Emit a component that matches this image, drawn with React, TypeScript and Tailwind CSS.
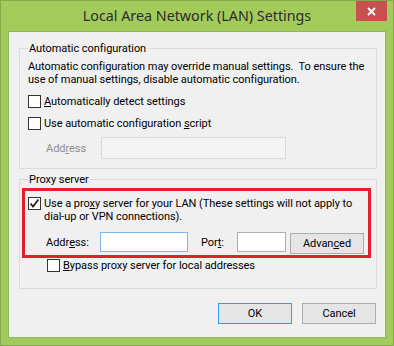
import React from 'react';

const Check: React.FC<{ checked?: boolean }> = ({ checked }) => (
  <div className="w-[13px] h-[13px] shrink-0 border border-[#333333] bg-white flex items-center justify-center">
    {checked && (
      <svg width="11" height="11" viewBox="0 0 11 11">
        <path d="M1.5 5.5 L4 8.5 L9.5 1.5" fill="none" stroke="#222" strokeWidth="1.8" />
      </svg>
    )}
  </div>
);

const Button: React.FC<{ children: React.ReactNode; primary?: boolean; className?: string }> = ({
  children,
  primary,
  className = '',
}) => (
  <button
    className={`w-[74px] h-[21px] flex items-center justify-center bg-[#e5e5e5] border ${
      primary ? 'border-[#3399ff]' : 'border-[#adadad]'
    } ${className}`}
  >
    {children}
  </button>
);

export default function App() {
  return (
    <div className="w-[394px] h-[346px] bg-[#a2cb5b] border border-[#84ab48] flex flex-col font-['Roboto',sans-serif] text-[11px] tracking-[-0.05px] leading-[13px] text-black">
      {/* title bar */}
      <div className="h-[30px] grid grid-cols-[38px_1fr_38px]">
        <div />
        <div className="flex items-center justify-center font-['Noto_Sans',sans-serif] tracking-normal text-[14.3px] text-[#2b2b2b] pb-[1px]">
          Local Area Network (LAN) Settings
        </div>
        <div className="flex justify-end pr-[6px]">
          <div className="w-[31px] h-[20px] bg-[#c75050] flex items-center justify-center">
            <svg width="9" height="9" viewBox="0 0 9 9">
              <path d="M1 1 L8 8 M8 1 L1 8" stroke="#fff" strokeWidth="1.8" />
            </svg>
          </div>
        </div>
      </div>

      {/* dialog body */}
      <div className="mx-[7px] h-[307px] bg-[#f0f0f0] border border-[#93b757] pl-[10px] pr-[8px] flex flex-col">
        {/* Automatic configuration */}
        <fieldset className="mt-[9px] border border-[#dcdcdc] pl-[8px] pr-[4px] pb-[9px]">
          <legend className="px-[1px] leading-[15px]">Automatic configuration</legend>
          <div className="mt-[4px] whitespace-pre">
            <div>Automatic configuration may override manual settings.  To ensure the</div>
            <div>use of manual settings, disable automatic configuration.</div>
          </div>
          <div className="mt-[9px] flex items-center gap-[3px]">
            <Check />
            <span>
              <u>A</u>utomatically detect settings
            </span>
          </div>
          <div className="mt-[9px] flex items-center gap-[3px]">
            <Check />
            <span>
              Use automatic configuration <u>s</u>cript
            </span>
          </div>
          <div className="mt-[7px] ml-[18px] flex items-center">
            <span className="w-[55px] text-[#8d8d8d]">
              Add<u>r</u>ess
            </span>
            <div className="w-[185px] h-[22px] border border-[#dadada] bg-[#f3f3f3]" />
          </div>
        </fieldset>

        {/* Proxy server */}
        <fieldset className="mt-[3px] border border-[#dcdcdc] pl-[2px] pr-[5px] pb-[16px]">
          <legend className="ml-[6px] px-[1px] leading-[15px]">Proxy server</legend>
          <div className="mt-[1px] border-[3px] border-[#e81c2a] pl-[3px] pt-[6px] pb-[1px] pr-[2px]">
            <div className="flex items-start gap-[3px]">
              <Check checked />
              <div className="whitespace-nowrap">
                <div>
                  Use a pro<u>x</u>y server for your LAN (These settings will not apply to
                </div>
                <div>dial-up or VPN connections).</div>
              </div>
            </div>
            <div className="mt-[9px] ml-[18px] flex items-start">
              <span className="w-[54px] h-[20px] flex items-center">
                Addr<u>e</u>ss:
              </span>
              <div className="w-[88px] h-[20px] border border-[#7eb4ea] bg-white" />
              <span className="ml-[13px] w-[36px] h-[20px] flex items-center">
                Por<u>t</u>:
              </span>
              <div className="w-[49px] h-[20px] border border-[#abadb3] bg-white" />
              <Button className="ml-[4px] mt-[1px]">
                Advan<u>c</u>ed
              </Button>
            </div>
          </div>
          <div className="mt-[1px] ml-[25px] flex items-center gap-[3px]">
            <Check />
            <span>
              <u>B</u>ypass proxy server for local addresses
            </span>
          </div>
        </fieldset>

        {/* buttons */}
        <div className="mt-[14px] flex justify-end gap-[10px] pr-[1px]">
          <Button primary>OK</Button>
          <Button>Cancel</Button>
        </div>
      </div>
    </div>
  );
}
